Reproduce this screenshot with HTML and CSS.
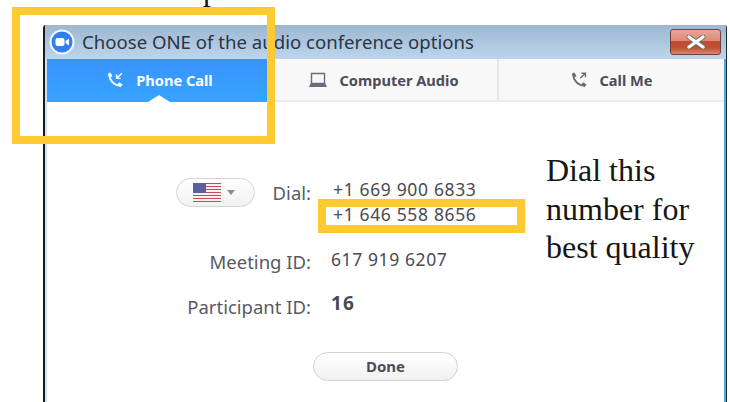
FILE: index.html
```html
<!DOCTYPE html>
<html lang="en">
<head>
<meta charset="utf-8">
<title>Choose ONE of the audio conference options</title>
<link rel="stylesheet" href="styles.css">
</head>
<body>
<div class="page">
  <span class="clipped-line">p</span>

  <section class="window">
    <header class="titlebar">
      <svg class="app-logo" viewBox="0 0 26 26" aria-hidden="true">
        <circle cx="13" cy="13" r="12.5" fill="#f4f8fd"/>
        <circle cx="13" cy="13" r="10.5" fill="#2f80ee"/>
        <rect x="6.5" y="9" width="9" height="8" rx="2" fill="#fff"/>
        <path d="M16.5 12l3.5-2.6v7.2L16.5 14z" fill="#fff"/>
      </svg>
      <h1 class="title">Choose ONE of the audio conference options</h1>
      <button class="close" aria-label="Close">
        <svg viewBox="0 0 22 14" width="22" height="14" aria-hidden="true">
          <path d="M4 2l14 10M18 2L4 12" stroke="#6d6d70" stroke-width="5" stroke-linecap="round"/>
          <path d="M4 2l14 10M18 2L4 12" stroke="#fff" stroke-width="3.2" stroke-linecap="round"/>
        </svg>
      </button>
    </header>

    <nav class="tabs">
      <div class="tab tab-active">
        <svg class="tab-icon" viewBox="0 0 20 20" aria-hidden="true">
          <path d="M3.6 3.5C3.4 10 9 16.4 16 16.2" fill="none" stroke="currentColor" stroke-width="2"/>
          <path d="M1.8 3.6L4.6 1.5l2.6 4-2.3 1.8zM12.6 14.6l2-2.2 3.8 2.7-2.2 2.9z" fill="currentColor"/>
          <path d="M17.5 2.5L12.5 7.5M11.8 3.8v4.4h4.4" fill="none" stroke="currentColor" stroke-width="1.6"/>
        </svg>
        <span>Phone Call</span>
      </div>
      <div class="tab">
        <svg class="tab-icon tab-icon-wide" viewBox="0 0 20 20" aria-hidden="true">
          <path d="M3.5 3.5h13v10h-13z" fill="none" stroke="currentColor" stroke-width="1.4"/>
          <path d="M2.6 13.6h14.8l1.6 3.4H1z" fill="currentColor"/>
        </svg>
        <span>Computer Audio</span>
      </div>
      <div class="tab">
        <svg class="tab-icon" viewBox="0 0 20 20" aria-hidden="true">
          <path d="M3.6 3.5C3.4 10 9 16.4 16 16.2" fill="none" stroke="currentColor" stroke-width="2"/>
          <path d="M1.8 3.6L4.6 1.5l2.6 4-2.3 1.8zM12.6 14.6l2-2.2 3.8 2.7-2.2 2.9z" fill="currentColor"/>
          <path d="M11.5 8L16.5 3M12.6 2.4h4.6V7" fill="none" stroke="currentColor" stroke-width="1.6"/>
        </svg>
        <span>Call Me</span>
      </div>
    </nav>

    <main class="panel">
      <div class="details">
        <div class="label label-dial">
          <button class="country" aria-label="Country">
            <span class="flag"></span>
            <span class="caret"></span>
          </button>
          <span>Dial:</span>
        </div>
        <div class="numbers">
          <div>+1 669 900 6833</div>
          <div>+1 646 558 8656</div>
        </div>
        <div class="label label-meeting">Meeting ID:</div>
        <div class="value value-meeting">617 919 6207</div>
        <div class="label label-participant">Participant ID:</div>
        <div class="value value-participant">16</div>
      </div>
      <button class="done">Done</button>
    </main>
  </section>

  <div class="frame frame-tab"></div>
  <div class="frame frame-number"></div>
  <p class="note">Dial this<br>number for<br>best quality</p>
</div>
</body>
</html>
```

FILE: styles.css
```css
* {
  box-sizing: border-box;
}

html,
body {
  margin: 0;
  padding: 0;
  background: #fff;
}

.page {
  position: relative;
  width: 730px;
  height: 402px;
  overflow: hidden;
  padding: 25px 3px 0 43px;
  font-family: "Noto Sans", sans-serif;
}

/* The tail of a line of text running off the top edge */
.clipped-line {
  position: absolute;
  left: 203px;
  top: -26px;
  font: 31px/31px "Liberation Serif", serif;
  color: #111;
}

/* Dialog window */
.window {
  height: 400px;
  display: flex;
  flex-direction: column;
  background: #fff;
  border-left: 2px solid #1a1a1a;
  border-right: 1px solid #1c2a33;
  border-top-left-radius: 3px;
  border-top-right-radius: 3px;
  box-shadow: inset 2px 0 0 #cfe2f3, inset -2px 0 0 #4fa9d8;
}

.titlebar {
  flex: 0 0 34px;
  display: flex;
  align-items: center;
  padding: 0 5px 0 4px;
  background: linear-gradient(#9db7d1, #bdd5ec);
  border-top-left-radius: 2px;
  border-top-right-radius: 2px;
}

.app-logo {
  flex: none;
  width: 26px;
  height: 26px;
}

.title {
  flex: 1;
  margin: 0 0 0 7px;
  font-size: 18.6px;
  font-weight: 400;
  line-height: 24px;
  color: #2b3442;
  white-space: nowrap;
}

.close {
  flex: none;
  width: 51px;
  height: 26px;
  margin-top: -1px;
  padding: 0;
  display: flex;
  align-items: center;
  justify-content: center;
  border: 1px solid #6f3f44;
  border-radius: 3px;
  background: linear-gradient(#e9a698 0, #dc8a78 46%, #bf4c2e 48%, #c2512f 75%, #d98672 100%);
}

/* Tab strip */
.tabs {
  flex: 0 0 43px;
  display: flex;
  margin: 0 2px;
  background: #f8f8f8;
  border-bottom: 2px solid #ececec;
}

.tab {
  position: relative;
  flex: 1;
  display: flex;
  align-items: center;
  justify-content: center;
  gap: 11px;
  font-size: 14.6px;
  font-weight: 700;
  color: #4c4c58;
  border-left: 2px solid #e6e6e6;
}

.tab:first-child {
  flex: 0 0 221px;
  border-left: 0;
}

.tab:nth-child(2) {
  flex: 0 0 229px;
  padding-left: 2px;
  border-left: 0;
}

.tab-icon {
  flex: none;
  width: 18px;
  height: 18px;
  color: #6b6b7c;
}

.tab-icon-wide {
  width: 20px;
  height: 20px;
}

.tab-active {
  margin-bottom: -2px;
  padding: 0 0 1px 4px;
  gap: 12px;
  color: #fff;
  background: linear-gradient(#3a92ff, #36a5ff);
}

.tab-active .tab-icon {
  color: #fff;
}

/* Notch pointing at the panel below the active tab */
.tab-active::after {
  content: "";
  position: absolute;
  left: 101px;
  bottom: 0;
  border-left: 11px solid transparent;
  border-right: 11px solid transparent;
  border-bottom: 7px solid #fff;
}

/* Panel contents */
.panel {
  flex: 1;
  display: flex;
  flex-direction: column;
  align-items: center;
  padding: 76px 2px 0;
}

.details {
  width: 100%;
  display: grid;
  grid-template-columns: 264px 1fr;
  column-gap: 21px;
  font-size: 18.5px;
  line-height: 24px;
  color: #595963;
}

.label {
  justify-self: end;
  white-space: nowrap;
}

.label-dial {
  display: flex;
  align-items: center;
  gap: 18px;
  height: 29px;
}

.country {
  width: 79px;
  height: 29px;
  padding: 0 0 0 16px;
  display: flex;
  align-items: center;
  gap: 6px;
  border: 1px solid #d4d4d4;
  border-radius: 15px;
  background: linear-gradient(#fff, #f2f2f2);
}

.flag {
  display: block;
  position: relative;
  width: 28px;
  height: 19px;
  background: repeating-linear-gradient(#c9485a 0, #c9485a 1.5px, #fbeeee 1.5px, #fbeeee 3px);
}

.flag::before {
  content: "";
  position: absolute;
  left: 0;
  top: 0;
  width: 13px;
  height: 10px;
  background: #5c5f9e;
}

.caret {
  display: block;
  border-left: 4.5px solid transparent;
  border-right: 4.5px solid transparent;
  border-top: 5px solid #8a8a8a;
}

.numbers {
  color: #4a4a52;
  font-size: 17.5px;
  line-height: 25px;
  letter-spacing: 0.65px;
  margin: -1px 0 0 1px;
}

.value {
  color: #4a4a52;
  font-size: 17.5px;
  letter-spacing: 0.6px;
  margin-left: -1px;
}

.label-meeting {
  margin-top: 23px;
}

.value-meeting {
  margin-top: 20px;
}

.label-participant {
  margin-top: 21px;
}

.value-participant {
  margin-top: 17px;
  font-size: 19px;
  font-weight: 700;
  letter-spacing: 1.2px;
}

.done {
  width: 145px;
  height: 29px;
  margin-top: 33px;
  padding: 0 0 2px;
  border: 1px solid #d2d2d2;
  border-radius: 15px;
  background: linear-gradient(#fff, #f1f1f1);
  font: 700 15px "Noto Sans", sans-serif;
  color: #4c4c58;
}

/* Highlight frames and the note drawn over the window */
.frame {
  position: absolute;
  border: 8px solid #fec931;
}

.frame-tab {
  left: 12px;
  top: 7px;
  width: 263px;
  height: 137px;
}

.frame-number {
  left: 318px;
  top: 199px;
  width: 207px;
  height: 34px;
}

.note {
  position: absolute;
  left: 546px;
  top: 151px;
  margin: 0;
  font: 32px/38.5px "Liberation Serif", serif;
  color: #161616;
  white-space: nowrap;
}
```
